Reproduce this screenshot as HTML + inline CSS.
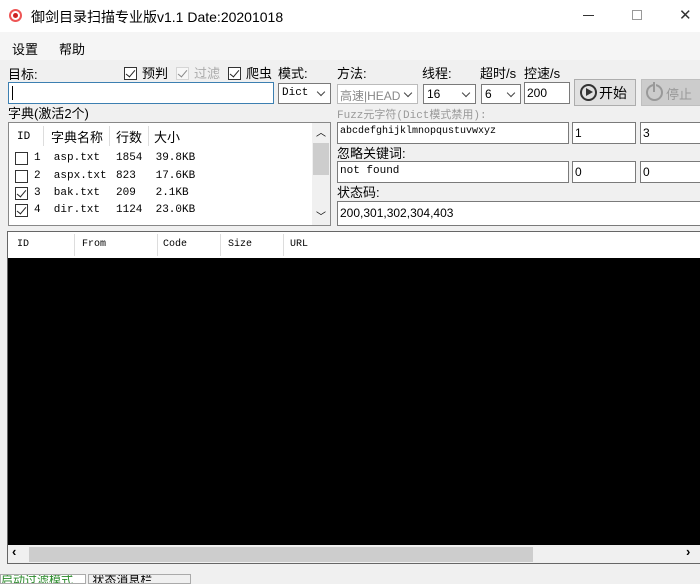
<!DOCTYPE html>
<html><head><meta charset="utf-8"><style>
*{box-sizing:border-box;margin:0;padding:0}
body{width:700px;height:582px;overflow:hidden;background:#f0f0f0;font-family:"Liberation Sans","Noto Sans CJK SC",sans-serif;font-size:12px;color:#000;position:relative}
.a{position:absolute;white-space:nowrap}
.box{position:absolute;background:#fff;border:1px solid #7a7a7a}
.mono{font-family:"Liberation Mono","Noto Sans CJK SC",monospace;font-size:11px}
.cb{position:absolute;width:13px;height:13px;border:1px solid #333;background:#fff}
.cb.c::after{content:"";position:absolute;left:3px;top:0px;width:4px;height:8px;border:solid #222;border-width:0 1.5px 1.5px 0;transform:rotate(40deg)}
.sel::after{content:"";position:absolute;right:6px;top:5px;width:5px;height:5px;border:solid #444;border-width:0 1px 1px 0;transform:rotate(45deg)}
</style></head><body>
<div class="a" style="left:0;top:0;width:700px;height:32px;background:#fff"></div>
<div class="a" style="left:9px;top:9px;width:13px;height:13px;border-radius:50%;border:2px solid #e55;"></div>
<div class="a" style="left:13px;top:13px;width:5px;height:5px;border-radius:50%;background:#c22"></div>
<div class="a" style="left:31px;top:7px;font-size:14px">御剑目录扫描专业版v1.1 Date:20201018</div>
<div class="a" style="left:583px;top:15px;width:11px;height:1px;background:#333"></div>
<div class="a" style="left:632px;top:10px;width:10px;height:10px;border:1px solid #999"></div>
<div class="a" style="left:679px;top:6px;font-size:15px;color:#333">✕</div>
<div class="a" style="left:0;top:32px;width:700px;height:28px;background:#f5f5f5"></div>
<div class="a" style="left:12px;top:39px;font-size:13px">设置</div>
<div class="a" style="left:59px;top:39px;font-size:13px">帮助</div>

<div class="a" style="left:8px;top:64px;font-size:13px">目标:</div>
<div class="cb c" style="left:124px;top:67px"></div><div class="a" style="left:142px;top:63px;font-size:13px">预判</div>
<div class="cb c" style="left:176px;top:67px;border-color:#bbb;opacity:.5"></div><div class="a" style="left:194px;top:63px;font-size:13px;color:#aaa">过滤</div>
<div class="cb c" style="left:228px;top:67px"></div><div class="a" style="left:246px;top:63px;font-size:13px">爬虫</div>
<div class="a" style="left:278px;top:63px;font-size:13px">模式:</div>
<div class="box" style="left:8px;top:82px;width:266px;height:22px;border-color:#3c7fb1"></div>
<div class="a" style="left:12px;top:86px;width:1px;height:14px;background:#000"></div>
<div class="box sel mono" style="left:278px;top:83px;width:53px;height:21px;padding:3px 3px">Dict</div>

<div class="a" style="left:337px;top:63px;font-size:13px">方法:</div>
<div class="a" style="left:422px;top:63px;font-size:13px">线程:</div>
<div class="a" style="left:480px;top:63px;font-size:13px">超时/s</div>
<div class="a" style="left:524px;top:63px;font-size:13px">控速/s</div>
<div class="box sel" style="left:337px;top:84px;width:81px;height:20px;padding:2px 2px;color:#888;border-color:#bbb;font-size:12px">高速|HEAD</div>
<div class="box sel" style="left:423px;top:84px;width:53px;height:20px;padding:2px 3px">16</div>
<div class="box sel" style="left:481px;top:84px;width:40px;height:20px;padding:2px 3px">6</div>
<div class="box" style="left:524px;top:82px;width:46px;height:22px;padding:3px 2px">200</div>
<div class="a" style="left:574px;top:79px;width:62px;height:27px;border:1px solid #adadad;background:#e1e1e1"></div>
<div class="a" style="left:580px;top:84px;width:17px;height:17px;border:2px solid #333;border-radius:50%"></div>
<div class="a" style="left:586px;top:88px;width:0;height:0;border-left:7px solid #333;border-top:4.5px solid transparent;border-bottom:4.5px solid transparent"></div>
<div class="a" style="left:599px;top:83px;font-size:14px">开始</div>
<div class="a" style="left:641px;top:79px;width:62px;height:27px;border:1px solid #bfbfbf;background:#ccc"></div>
<div class="a" style="left:646px;top:84px;width:17px;height:17px;border:2px solid #999;border-radius:50%"></div>
<div class="a" style="left:653px;top:82px;width:3px;height:10px;background:#ccc;border-left:2px solid #999"></div>
<div class="a" style="left:666px;top:84px;font-size:13px;color:#999">停止</div>

<div class="a" style="left:8px;top:103px;font-size:13px">字典(激活2个)</div>
<div class="box" style="left:8px;top:122px;width:323px;height:104px;border-color:#888"></div>
<div class="a mono" style="left:17px;top:131px">ID</div>
<div class="a" style="left:43px;top:126px;width:1px;height:20px;background:#ddd"></div>
<div class="a" style="left:51px;top:127px;font-size:13px">字典名称</div>
<div class="a" style="left:109px;top:126px;width:1px;height:20px;background:#ddd"></div>
<div class="a" style="left:116px;top:127px;font-size:13px">行数</div>
<div class="a" style="left:148px;top:126px;width:1px;height:20px;background:#ddd"></div>
<div class="a" style="left:154px;top:127px;font-size:13px">大小</div>
<div class="cb" style="left:15px;top:152px"></div><div class="a mono" style="left:34px;top:152px">1&nbsp;&nbsp;asp.txt</div><div class="a mono" style="left:116px;top:152px">1854&nbsp;&nbsp;39.8KB</div>
<div class="cb" style="left:15px;top:170px"></div><div class="a mono" style="left:34px;top:170px">2&nbsp;&nbsp;aspx.txt</div><div class="a mono" style="left:116px;top:170px">823&nbsp;&nbsp;&nbsp;17.6KB</div>
<div class="cb c" style="left:15px;top:187px"></div><div class="a mono" style="left:34px;top:187px">3&nbsp;&nbsp;bak.txt</div><div class="a mono" style="left:116px;top:187px">209&nbsp;&nbsp;&nbsp;2.1KB</div>
<div class="cb c" style="left:15px;top:204px"></div><div class="a mono" style="left:34px;top:204px">4&nbsp;&nbsp;dir.txt</div><div class="a mono" style="left:116px;top:204px">1124&nbsp;&nbsp;23.0KB</div>
<div class="a" style="left:312px;top:123px;width:18px;height:102px;background:#f0f0f0"></div>
<div class="a" style="left:313px;top:143px;width:16px;height:32px;background:#cdcdcd"></div>
<div class="a" style="left:316px;top:124px;font-size:10px">︿</div>
<div class="a" style="left:316px;top:208px;font-size:10px">﹀</div>

<div class="a mono" style="left:337px;top:106px;color:#999">Fuzz元字符(Dict模式禁用):</div>
<div class="box mono" style="left:337px;top:122px;width:232px;height:22px;padding:3px 2px;font-size:10px">abcdefghijklmnopqustuvwxyz</div>
<div class="box" style="left:572px;top:122px;width:64px;height:22px;padding:3px 2px">1</div>
<div class="box" style="left:640px;top:122px;width:64px;height:22px;padding:3px 2px">3</div>
<div class="a" style="left:337px;top:143px;font-size:13px">忽略关键词:</div>
<div class="box mono" style="left:337px;top:161px;width:232px;height:22px;padding:3px 2px">not found</div>
<div class="box" style="left:572px;top:161px;width:64px;height:22px;padding:3px 2px">0</div>
<div class="box" style="left:640px;top:161px;width:64px;height:22px;padding:3px 2px">0</div>
<div class="a" style="left:337px;top:182px;font-size:13px">状态码:</div>
<div class="box" style="left:337px;top:201px;width:370px;height:25px;padding:4px 2px;font-size:12px">200,301,302,304,403</div>

<div class="a" style="left:7px;top:231px;width:700px;height:333px;border:1px solid #666;background:#000"></div>
<div class="a" style="left:8px;top:232px;width:700px;height:26px;background:#fff"></div>
<div class="a mono" style="left:17px;top:239px;font-size:10px">ID</div>
<div class="a" style="left:74px;top:234px;width:1px;height:22px;background:#ddd"></div>
<div class="a mono" style="left:82px;top:239px;font-size:10px">From</div>
<div class="a" style="left:157px;top:234px;width:1px;height:22px;background:#ddd"></div>
<div class="a mono" style="left:163px;top:239px;font-size:10px">Code</div>
<div class="a" style="left:220px;top:234px;width:1px;height:22px;background:#ddd"></div>
<div class="a mono" style="left:228px;top:239px;font-size:10px">Size</div>
<div class="a" style="left:283px;top:234px;width:1px;height:22px;background:#ddd"></div>
<div class="a mono" style="left:290px;top:239px;font-size:10px">URL</div>
<div class="a" style="left:8px;top:545px;width:692px;height:18px;background:#f0f0f0"></div>
<div class="a" style="left:29px;top:547px;width:504px;height:15px;background:#cdcdcd"></div>
<div class="a" style="left:12px;top:544px;font-size:13px;font-weight:bold">‹</div>
<div class="a" style="left:686px;top:544px;font-size:13px;font-weight:bold">›</div>

<div class="a" style="left:0;top:574px;width:86px;height:10px;border:1px solid #aaa;background:#fff;font-size:12px;color:#2a8a2a;line-height:10px;overflow:hidden">启动过滤模式</div>
<div class="a" style="left:88px;top:574px;width:103px;height:10px;border:1px solid #aaa;font-size:12px;line-height:10px;overflow:hidden">&nbsp;状态消息栏</div>
</body></html>
